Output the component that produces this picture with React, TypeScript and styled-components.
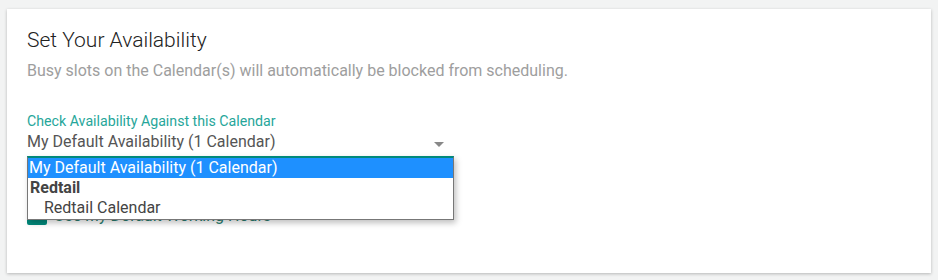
import * as React from "react";
import styled, { createGlobalStyle } from "styled-components";

const GlobalStyle = createGlobalStyle`
  html, body {
    margin: 0;
    padding: 0;
    background: #f2f3f3;
    font-family: Roboto, "Liberation Sans", sans-serif;
  }
`;

const options = [
  { label: "My Default Availability (1 Calendar)", kind: "option", selected: true },
  { label: "Redtail", kind: "group" },
  { label: "Redtail Calendar", kind: "child" },
];

export default function App() {
  return (
    <>
      <GlobalStyle />
      <Page>
        <Card>
          <Title>Set Your Availability</Title>
          <Subtitle>
            Busy slots on the Calendar(s) will automatically be blocked from scheduling.
          </Subtitle>

          <Field>
            <Label>Check Availability Against this Calendar</Label>
            <SelectWrap>
              <SelectValue>
                My Default Availability (1 Calendar)
                <Caret />
              </SelectValue>
              <List>
                {options.map((o) => (
                  <Option key={o.label} $kind={o.kind} $selected={!!o.selected}>
                    {o.label}
                  </Option>
                ))}
              </List>
            </SelectWrap>
          </Field>

          <CheckRow>
            <CheckBox />
            <CheckLabel>Use My Default Working Hours</CheckLabel>
          </CheckRow>
        </Card>
      </Page>
    </>
  );
}

const Page = styled.div`
  padding: 9px 7px 7px 7px;
`;

const Card = styled.div`
  background: #fff;
  height: 264px;
  box-sizing: border-box;
  padding: 19px 20px 0 20px;
  box-shadow: 0 1px 3px rgba(0, 0, 0, 0.25);
`;

const Title = styled.h2`
  margin: 0;
  font-size: 21px;
  font-weight: 300;
  line-height: 24px;
  color: #222;
`;

const Subtitle = styled.p`
  margin: 9px 0 0 0;
  font-size: 16px;
  line-height: 20px;
  color: #9e9e9e;
`;

const Field = styled.div`
  margin-top: 30px;
  width: 426px;
`;

const Label = styled.div`
  font-size: 14.2px;
  line-height: 20px;
  color: #26a69a;
`;

const SelectWrap = styled.div`
  position: relative;
  padding-top: 1px;
`;

const SelectValue = styled.div`
  display: flex;
  align-items: center;
  justify-content: space-between;
  font-size: 16px;
  line-height: 20px;
  color: #555;
  padding-bottom: 5px;
  border-bottom: 1px solid #26a69a;
`;

const Caret = styled.span`
  width: 0;
  height: 0;
  margin-right: 9px;
  margin-top: 4px;
  border-left: 5px solid transparent;
  border-right: 5px solid transparent;
  border-top: 5px solid #888;
`;

const List = styled.div`
  position: absolute;
  z-index: 2;
  top: 25px;
  left: 0;
  width: 427px;
  box-sizing: border-box;
  background: #fff;
  border: 1px solid #777;
  border-top: 2px solid #00897b;
  padding-bottom: 1px;
  box-shadow: 2px 3px 6px rgba(0, 0, 0, 0.25);
`;

const Option = styled.div<{ $kind: string; $selected: boolean }>`
  font-size: 16px;
  line-height: 20px;
  padding-left: ${(p) => (p.$kind === "child" ? "16px" : p.$kind === "group" ? "2px" : "1px")};
  font-weight: ${(p) => (p.$kind === "group" ? 700 : 400)};
  color: ${(p) => (p.$selected ? "#fff" : "#444")};
  background: ${(p) => (p.$selected ? "#1e90ff" : "transparent")};
`;

const CheckRow = styled.div`
  display: flex;
  align-items: flex-end;
  gap: 7px;
  margin-top: 47px;
`;

const CheckBox = styled.span`
  width: 20px;
  height: 20px;
  border-radius: 2px;
  background: #00897b;
`;

const CheckLabel = styled.span`
  font-size: 16px;
  line-height: 16px;
  margin-bottom: 1px;
  color: #2a7d6f;
`;
